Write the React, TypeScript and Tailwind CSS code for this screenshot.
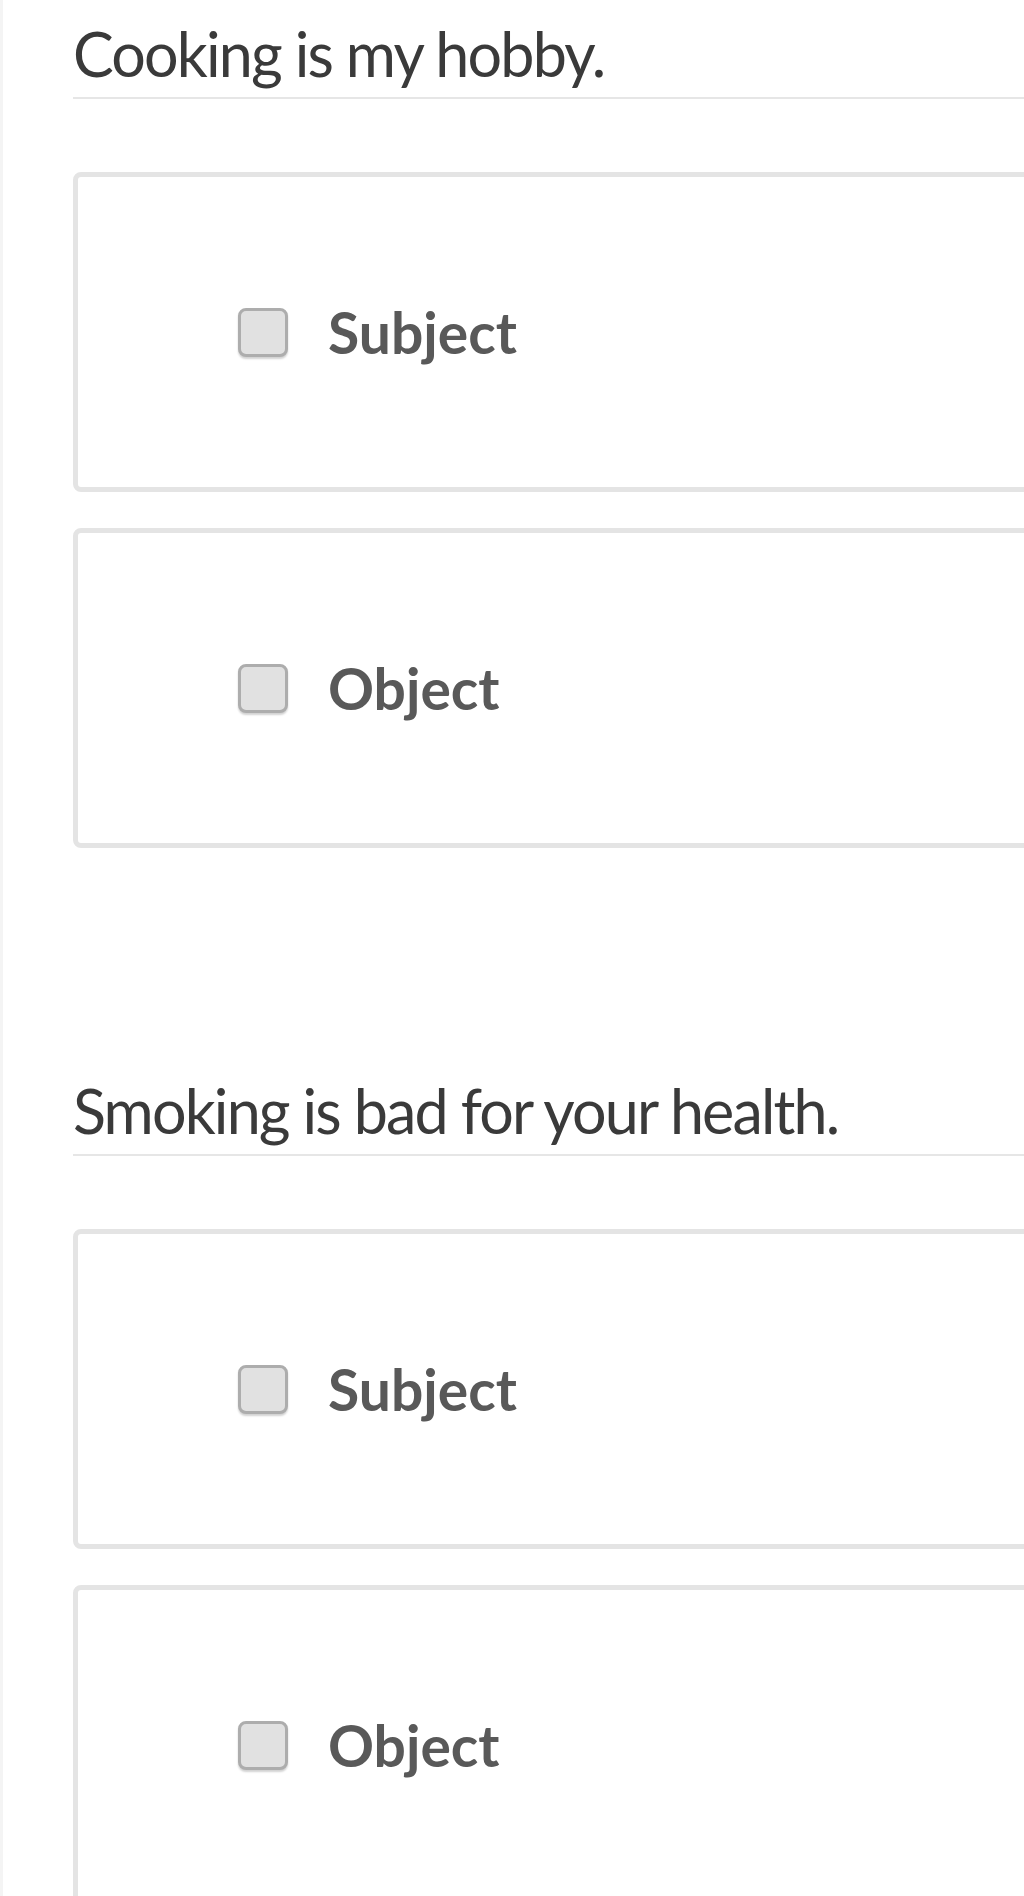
import React from 'react';

type Question = {
  sentence: string;
  options: string[];
};

const questions: Question[] = [
  { sentence: 'Cooking is my hobby.', options: ['Subject', 'Object'] },
  { sentence: 'Smoking is bad for your health.', options: ['Subject', 'Object'] },
];

function OptionCard({ label }: { label: string }) {
  return (
    <label className="flex h-[320px] w-[1100px] items-center rounded-[8px] border-[5px] border-[#e4e4e4] bg-white pl-[160px]">
      {/* checkbox */}
      <span className="block h-[49px] w-[50px] shrink-0 rounded-[8px] border-[3px] border-[#adadad] bg-[#e1e1e1] shadow-[0_2px_2px_rgba(0,0,0,0.18)]" />
      <span className="ml-[40px] text-[57px] font-bold leading-none tracking-[0em] text-[#595959]">
        {label}
      </span>
    </label>
  );
}

export default function App() {
  return (
    <div
      className="h-[1896px] w-[1024px] overflow-hidden border-l-[3px] border-[#f4f4f4] bg-white"
      style={{ fontFamily: 'Lato, "Liberation Sans", sans-serif' }}
    >
      <div className="w-[1100px] pl-[70px]">
        {questions.map((q, qi) => (
          <section key={qi} className={qi === 0 ? 'pt-[17px]' : 'mt-[209px] pt-[17px]'}>
            <h2 className="border-b-2 border-[#e6e6e6] pb-[7px] text-[61px] font-normal leading-[1.2] tracking-[-0.03em] text-[#3a3a3a]">
              {q.sentence}
            </h2>
            <div className="mt-[73px] flex flex-col gap-[36px]">
              {q.options.map((opt) => (
                <OptionCard key={opt} label={opt} />
              ))}
            </div>
          </section>
        ))}
      </div>
    </div>
  );
}
